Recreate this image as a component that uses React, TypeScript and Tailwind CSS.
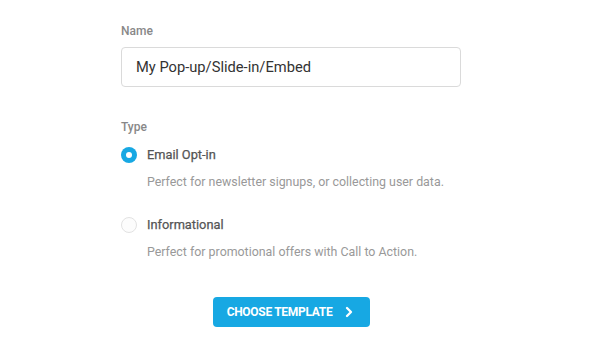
import { ChevronRight } from 'lucide-react'

const options = [
  { id: 'email', label: 'Email Opt-in', desc: 'Perfect for newsletter signups, or collecting user data.', checked: true },
  { id: 'info', label: 'Informational', desc: 'Perfect for promotional offers with Call to Action.', checked: false },
]

const Radio = ({ checked }: { checked: boolean }) =>
  checked ? (
    <span className="flex h-4 w-4 flex-shrink-0 items-center justify-center rounded-full bg-[#17a8e3]">
      <span className="h-[6px] w-[6px] rounded-full bg-white" />
    </span>
  ) : (
    <span className="h-4 w-4 flex-shrink-0 rounded-full border border-[#e2e2e2] bg-[#fcfcfc]" />
  )

export default function App() {
  return (
    <div className="min-h-[356px] bg-white font-['Roboto',sans-serif]">
      <div className="ml-[121px] w-[340px] pt-[23px]">
        {/* Name field */}
        <label className="block text-[12px] leading-4 font-medium text-[#888]">Name</label>
        <input
          defaultValue="My Pop-up/Slide-in/Embed"
          className="mt-2 h-10 w-full rounded border border-[#dadada] px-[14px] text-[14.7px] text-[#333] outline-none"
        />

        {/* Type */}
        <div className="mt-8 text-[12px] leading-4 font-medium text-[#888]">Type</div>
        <div className="mt-[12px] flex flex-col gap-[27px]">
          {options.map((o) => (
            <div key={o.id}>
              <div className="flex h-4 items-center gap-[10px]">
                <Radio checked={o.checked} />
                <span className="text-[12.8px] text-[#555] [-webkit-text-stroke:0.25px_#555]">{o.label}</span>
              </div>
              <p className="mt-[11px] pl-[26px] text-[12.4px] leading-4 text-[#999]">{o.desc}</p>
            </div>
          ))}
        </div>

        <div className="mt-[37px] flex justify-center">
          <button className="flex h-[30px] w-[157px] items-center justify-center gap-[9px] rounded bg-[#17a8e3] pl-[2px] text-[12px] font-bold tracking-[-0.3px] text-white uppercase">
            Choose Template
            <ChevronRight className="h-4 w-4" strokeWidth={3.5} />
          </button>
        </div>
      </div>
    </div>
  )
}
